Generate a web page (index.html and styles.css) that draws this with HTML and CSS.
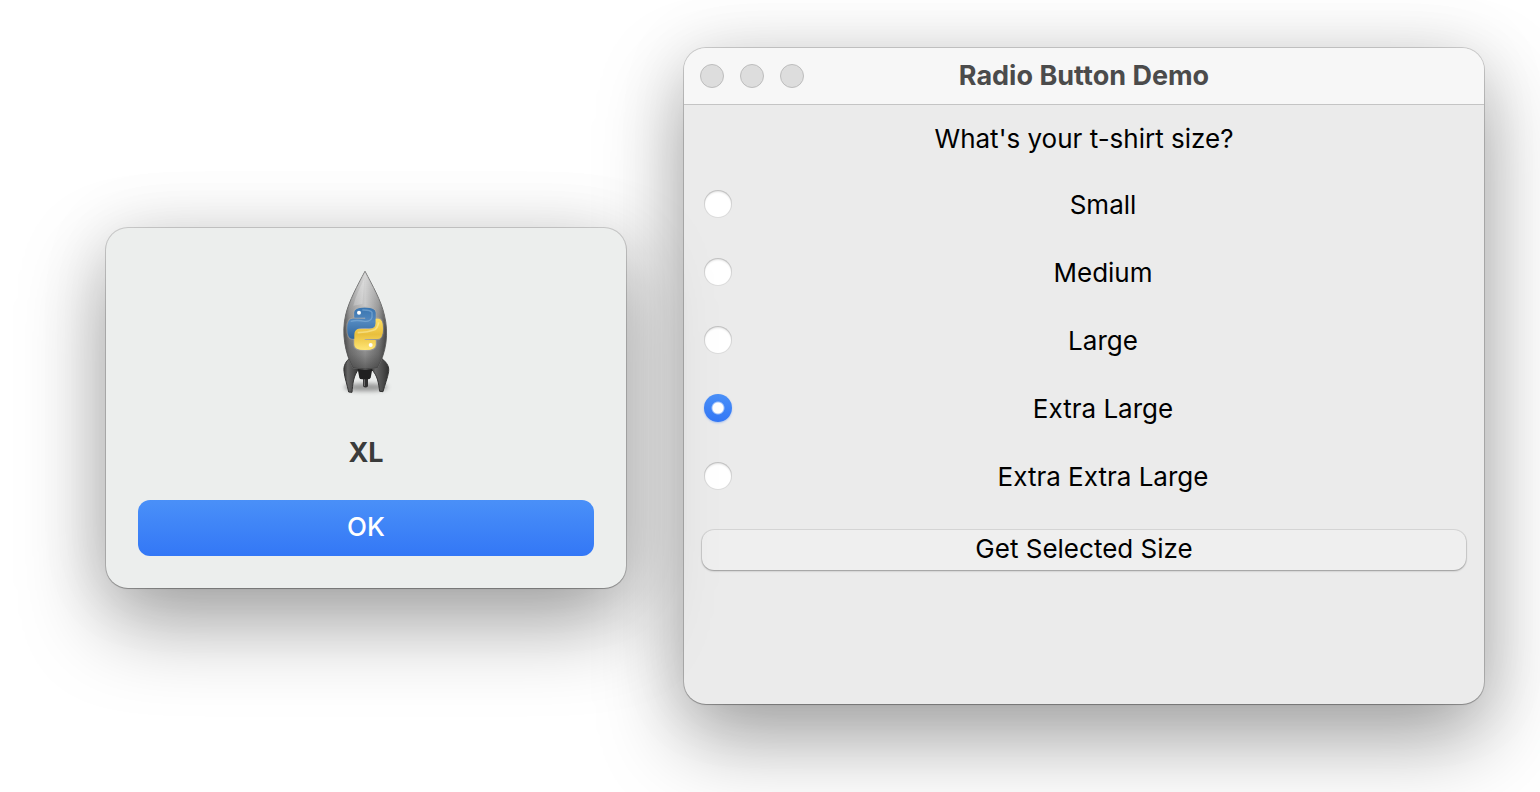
FILE: index.html
```html
<!DOCTYPE html>
<html lang="en">
<head>
<meta charset="utf-8">
<title>Radio Button Demo</title>
<link rel="stylesheet" href="styles.css">
</head>
<body>
<main class="desktop">
  <section class="dialog" role="alertdialog" aria-labelledby="message">
    <svg class="rocket" viewBox="-69 24 384 384" aria-hidden="true">
      <defs>
        <linearGradient id="hull" x1="0" x2="1" y1="0" y2="0">
          <stop offset="0" stop-color="#555"/>
          <stop offset=".13" stop-color="#8d8d8d"/>
          <stop offset=".5" stop-color="#c4c4c4"/>
          <stop offset=".82" stop-color="#8d8d8d"/>
          <stop offset="1" stop-color="#484848"/>
        </linearGradient>
        <linearGradient id="shade" x1="0" x2="0" y1="0" y2="1">
          <stop offset="0" stop-color="#fff" stop-opacity=".35"/>
          <stop offset=".35" stop-color="#fff" stop-opacity=".1"/>
          <stop offset=".6" stop-color="#333" stop-opacity=".12"/>
          <stop offset=".85" stop-color="#222" stop-opacity=".36"/>
          <stop offset="1" stop-color="#222" stop-opacity=".62"/>
        </linearGradient>
        <linearGradient id="fin" x1="0" x2="1" y1="0" y2="0">
          <stop offset="0" stop-color="#3a3a3a"/>
          <stop offset=".25" stop-color="#666"/>
          <stop offset=".65" stop-color="#4c4c4c"/>
          <stop offset="1" stop-color="#303030"/>
        </linearGradient>
        <linearGradient id="blue" x1="0" x2="0" y1="0" y2="1">
          <stop offset="0" stop-color="#3975b0"/>
          <stop offset=".45" stop-color="#5288bf"/>
          <stop offset="1" stop-color="#2f649b"/>
        </linearGradient>
        <linearGradient id="yellow" x1="0" x2="0" y1="0" y2="1">
          <stop offset="0" stop-color="#ffdf63"/>
          <stop offset=".5" stop-color="#e9bf3d"/>
          <stop offset="1" stop-color="#ffe676"/>
        </linearGradient>
        <filter id="soft" x="-30%" y="-60%" width="160%" height="220%"><feGaussianBlur stdDeviation="6"/></filter>
        <filter id="smooth"><feGaussianBlur stdDeviation="2"/></filter>
      </defs>
      <ellipse cx="123" cy="382" rx="66" ry="12" fill="#555" opacity=".55" filter="url(#soft)"/>
      <path d="M114 352H129V379Q122 386 114 379Z" fill="#303030"/>
      <path d="M118 356V378" stroke="#777" stroke-width="3"/>
      <path d="M78 291C62 304 55 317 57 334C59 354 67 375 71 396L81 397C83 374 85 345 102 327Z" fill="url(#fin)" stroke="#333" stroke-width="3"/>
      <path d="M165 291C181 304 193 315 191 334C188 354 179 375 174 395L164 394C161 374 159 345 138 327Z" fill="url(#fin)" stroke="#333" stroke-width="3"/>
      <path d="M98 326H142L137 353Q135 358 128 358H111Q104 358 103 353Z" fill="#202020"/>
      <path d="M120 34C98 76 72 122 62 165C49 219 60 280 84 324Q121 331 157 324C184 278 192 220 178 165C168 121 142 76 120 34Z" fill="url(#hull)" stroke="#666" stroke-width="3"/>
      <path d="M120 34C98 76 72 122 62 165C49 219 60 280 84 324Q121 331 157 324C184 278 192 220 178 165C168 121 142 76 120 34Z" fill="url(#shade)"/>
      <path d="M118 56C103 84 91 112 85 137L112 132Z" fill="#fff" opacity=".22" filter="url(#smooth)"/>
      <g stroke="#b0b0ac" stroke-opacity=".4" stroke-width="7" stroke-linejoin="round" filter="url(#smooth)">
        <path d="M88 157Q88 143 119 143Q151 143 151 158V188Q151 203 136 203H109Q90 203 90 222V236H81Q67 236 67 205Q67 176 84 176H121V171H88Z" fill="#3975b0"/>
        <path d="M152 176H160Q173 176 173 206Q173 237 156 237H119V242H152V254Q152 270 120 270Q88 270 88 254V224Q88 208 104 208H133Q152 208 152 190Z" fill="#e9bf3d"/>
      </g>
      <path d="M88 157Q88 143 119 143Q152 143 152 158V190Q152 205 136 205H109Q90 205 90 222V236H81Q67 236 67 205Q67 176 84 176H121V173H88Z" fill="url(#blue)"/>
      <path d="M152 176H160Q174 176 174 206Q174 237 156 237H119V240H152V254Q152 270 120 270Q88 270 88 254V224Q88 207 104 207H133Q152 207 152 190Z" fill="url(#yellow)"/>
      <path d="M77 184Q96 179 119 184Q137 185 141 172V157Q136 149 112 150" fill="none" stroke="#a6cdec" stroke-width="4" opacity=".4" filter="url(#smooth)"/>
      <path d="M98 218Q130 216 149 209Q158 204 161 187" fill="none" stroke="#fff5b5" stroke-width="5" opacity=".5" filter="url(#smooth)"/>
      <circle cx="102" cy="158" r="6" fill="#fff"/>
      <circle cx="137" cy="255" r="6" fill="#fff"/>
    </svg>
    <p class="message" id="message">XL</p>
    <button class="ok" type="button">OK</button>
  </section>

  <section class="window" aria-labelledby="title">
    <header class="titlebar">
      <div class="controls">
        <button class="control" type="button" aria-label="Close"></button>
        <button class="control" type="button" aria-label="Minimize"></button>
        <button class="control" type="button" aria-label="Zoom"></button>
      </div>
      <h1 class="title" id="title">Radio Button Demo</h1>
    </header>
    <form class="form">
      <fieldset class="sizes">
        <legend class="question">What's your t-shirt size?</legend>
        <div class="option"><input class="radio" type="radio" name="size" id="s"><label class="label" for="s">Small</label></div>
        <div class="option"><input class="radio" type="radio" name="size" id="m"><label class="label" for="m">Medium</label></div>
        <div class="option"><input class="radio" type="radio" name="size" id="l"><label class="label" for="l">Large</label></div>
        <div class="option"><input class="radio" type="radio" name="size" id="xl" checked><label class="label" for="xl">Extra Large</label></div>
        <div class="option"><input class="radio" type="radio" name="size" id="xxl"><label class="label" for="xxl">Extra Extra Large</label></div>
      </fieldset>
      <button class="submit" type="button">Get Selected Size</button>
    </form>
  </section>
</main>
</body>
</html>
```

FILE: styles.css
```css
* {
  box-sizing: border-box;
}

body {
  margin: 0;
  background: #fff;
  color: #000;
  font: 26px/32px Inter, "Liberation Sans", sans-serif;
}

button {
  font: inherit;
}

.desktop {
  display: grid;
  grid-template-columns: 13fr 20fr;
  align-items: start;
  gap: 58px;
  min-height: 100vh;
  padding: 48px 56px 88px 106px;
  overflow: hidden;
}

.dialog,
.window {
  border-radius: 22px;
  box-shadow: 0 0 0 1px rgba(0, 0, 0, .16), 0 1px 1px rgba(0, 0, 0, .2), 0 36px 84px rgba(0, 0, 0, .34), 0 4px 70px rgba(0, 0, 0, .1);
}

.dialog {
  z-index: 1;
  display: flex;
  flex-direction: column;
  align-items: center;
  margin-top: 180px;
  padding: 40px 32px 32px;
  background: #eceeed;
}

.rocket {
  width: 128px;
  height: 128px;
}

.message {
  margin: 41px 0 31px;
  color: #3a3b3b;
  font-size: 27px;
  font-weight: 700;
}

.ok {
  width: 100%;
  padding: 11px 0 13px;
  border: 0;
  border-radius: 12px;
  background: linear-gradient(#4a90f8, #3377f6);
  color: #fff;
  font-weight: 500;
}

.window {
  padding-bottom: 116px;
  background: #ebebeb;
}

.titlebar {
  display: grid;
  grid-template-columns: 1fr auto 1fr;
  align-items: center;
  padding: 12px 16px;
  border-bottom: 1px solid #c4c4c4;
  border-radius: 22px 22px 0 0;
  background: #f7f7f7;
}

.controls {
  display: flex;
  gap: 16px;
}

.control {
  width: 24px;
  height: 24px;
  padding: 0;
  border: 1px solid #bdbdbd;
  border-radius: 50%;
  background: #dddddd;
}

.title {
  margin: 0;
  color: #4b4b4b;
  font-size: 27px;
  font-weight: 700;
  line-height: 32px;
}

.form {
  padding: 18px;
}

.sizes {
  margin: 0;
  padding: 0;
  border: 0;
}

.question {
  width: 100%;
  margin-bottom: 15px;
  padding: 0;
  text-align: center;
}

.option {
  display: flex;
  align-items: center;
  gap: 8px;
  height: 68px;
  padding-left: 2px;
}

.radio {
  appearance: none;
  flex: none;
  width: 28px;
  height: 28px;
  margin: 0;
  border-radius: 50%;
  background: #fff;
  box-shadow: inset 0 0 0 1px rgba(0, 0, 0, .14), inset 0 2px 2px rgba(0, 0, 0, .12);
}

.radio:checked {
  background: radial-gradient(circle, #fff 5px, transparent 7px), linear-gradient(#4a90f8, #3377f6);
  box-shadow: 0 1px 2px rgba(51, 119, 246, .35);
}

.label {
  flex: 1;
  padding-top: 2px;
  text-align: center;
}

.submit {
  display: block;
  width: 100%;
  margin-top: 20px;
  padding: 3px 0 5px;
  border: 0;
  border-radius: 12px;
  background: #efefef;
  box-shadow: 0 0 0 1px rgba(0, 0, 0, .08), 0 1px 2px rgba(0, 0, 0, .3);
  color: #000;
}
```
